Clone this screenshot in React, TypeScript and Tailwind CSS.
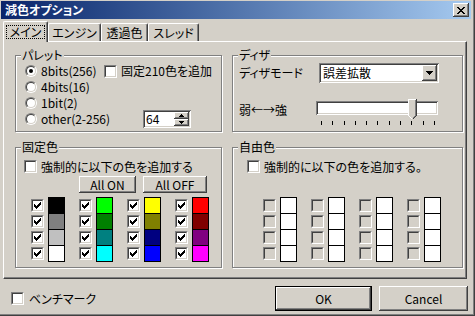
import React from "react";

const RAISED = "shadow-[inset_-1px_-1px_#404040,inset_1px_1px_#ffffff,inset_-2px_-2px_#808080]";
const SUNKEN = "shadow-[inset_1px_1px_#808080,inset_-1px_-1px_#ffffff,inset_2px_2px_#404040,inset_-2px_-2px_#d4d0c8]";

function CheckMark() {
  const rows: [number, number, number][] = [
    [6, 0, 1], [5, 1, 2], [0, 2, 1], [4, 2, 3], [0, 3, 2], [3, 3, 3], [0, 4, 5], [1, 5, 3], [2, 6, 1],
  ];
  return (
    <svg width="7" height="7" viewBox="0 0 7 7" shapeRendering="crispEdges">
      {rows.map(([x, y, w], i) => (
        <rect key={i} x={x} y={y} width={w} height={1} fill="#000" />
      ))}
    </svg>
  );
}

function Check({ checked = false, disabled = false }: { checked?: boolean; disabled?: boolean }) {
  return (
    <div className="w-[13px] h-[13px] shrink-0 border border-t-[#808080] border-l-[#808080] border-r-white border-b-white">
      <div
        className={
          disabled
            ? "w-full h-full border border-t-[#404040] border-l-[#404040] border-r-[#d4d0c8] border-b-[#d4d0c8] bg-[#d4d0c8] flex items-center justify-center"
            : "w-full h-full border border-t-[#404040] border-l-[#404040] border-r-[#d4d0c8] border-b-[#d4d0c8] bg-white flex items-center justify-center"
        }
      >
        {checked && <CheckMark />}
      </div>
    </div>
  );
}

function Radio({ checked = false }: { checked?: boolean }) {
  return (
    <div className="w-[12px] h-[12px] shrink-0 rounded-full border border-t-[#808080] border-l-[#808080] border-r-white border-b-white">
      <div className="w-full h-full rounded-full border border-t-[#404040] border-l-[#404040] border-r-[#d4d0c8] border-b-[#d4d0c8] bg-white flex items-center justify-center">
        {checked && <div className="w-[4px] h-[4px] rounded-full bg-black" />}
      </div>
    </div>
  );
}

function Group({ label, children }: { label: string; children: React.ReactNode }) {
  return (
    <div className="relative border border-[#808080] shadow-[inset_1px_1px_#ffffff,1px_1px_#ffffff]">
      <span className="absolute left-[5px] -top-[8px] px-[1px] bg-[#d4d0c8] leading-[14px] whitespace-nowrap">
        {label}
      </span>
      {children}
    </div>
  );
}

function Arrow({ up }: { up: boolean }) {
  return (
    <svg width="5" height="3" viewBox="0 0 5 3" shapeRendering="crispEdges">
      {up ? (
        <>
          <rect x="2" y="0" width="1" height="1" fill="#000" />
          <rect x="1" y="1" width="3" height="1" fill="#000" />
          <rect x="0" y="2" width="5" height="1" fill="#000" />
        </>
      ) : (
        <>
          <rect x="0" y="0" width="5" height="1" fill="#000" />
          <rect x="1" y="1" width="3" height="1" fill="#000" />
          <rect x="2" y="2" width="1" height="1" fill="#000" />
        </>
      )}
    </svg>
  );
}

function Spinner() {
  return (
    <div className={`w-[48px] h-[18px] bg-white p-[2px] flex ${SUNKEN}`}>
      <span className="flex-1 pl-[1px] leading-[14px]">64</span>
      <div className="w-[15px] flex flex-col">
        <div className={`h-[7px] bg-[#d4d0c8] flex items-center justify-center ${RAISED}`}>
          <Arrow up />
        </div>
        <div className={`h-[7px] bg-[#d4d0c8] flex items-center justify-center ${RAISED}`}>
          <Arrow up={false} />
        </div>
      </div>
    </div>
  );
}

function Combo() {
  return (
    <div className={`w-[120px] h-[20px] bg-white p-[2px] flex items-center ${SUNKEN}`}>
      <span className="flex-1 pl-[2px]">誤差拡散</span>
      <div className={`w-[15px] h-[16px] bg-[#d4d0c8] flex items-center justify-center ${RAISED}`}>
        <svg width="7" height="4" viewBox="0 0 7 4" shapeRendering="crispEdges">
          <rect x="0" y="0" width="7" height="1" fill="#000" />
          <rect x="1" y="1" width="5" height="1" fill="#000" />
          <rect x="2" y="2" width="3" height="1" fill="#000" />
          <rect x="3" y="3" width="1" height="1" fill="#000" />
        </svg>
      </div>
    </div>
  );
}

function Slider() {
  const ticks = Array.from({ length: 11 });
  return (
    <div className="relative w-[122px] h-[26px]">
      <div className={`mt-[2px] h-[14px] bg-white ${SUNKEN}`} />
      <div className="flex justify-between pl-[5px] pr-[3px] mt-[6px]">
        {ticks.map((_, i) => (
          <div key={i} className="w-[1px] h-[4px] bg-black" />
        ))}
      </div>
      <svg className="absolute left-[92px] top-0" width="9" height="21" viewBox="0 0 9 21" shapeRendering="crispEdges">
        <polygon points="0,0 9,0 9,16 4.5,20.5 0,16" fill="#d4d0c8" />
        <path d="M0.5 16 V0.5 H8" stroke="#ffffff" fill="none" />
        <path d="M0.5 16.5 L4 20" stroke="#ffffff" fill="none" />
        <path d="M7.5 1 V16.3 L4.5 19.3" stroke="#808080" fill="none" />
        <path d="M8.5 0 V16.5 L4.5 20.5" stroke="#404040" fill="none" />
      </svg>
    </div>
  );
}

function Swatches({ cells }: { cells: string[] }) {
  return (
    <div className="w-[17px] flex flex-col border border-black">
      {cells.map((c, i) => (
        <div key={i} className={i === 0 ? `h-[15px] ${c}` : `h-[16px] border-t border-black ${c}`} />
      ))}
    </div>
  );
}

function ColorColumn({ cells, checked, disabled }: { cells: string[]; checked: boolean; disabled: boolean }) {
  return (
    <div className="flex gap-[4px]">
      <div className="flex flex-col gap-[3px] pt-[2px]">
        {cells.map((_, i) => (
          <Check key={i} checked={checked} disabled={disabled} />
        ))}
      </div>
      <Swatches cells={cells} />
    </div>
  );
}

const FIXED = [
  ["bg-[#000000]", "bg-[#808080]", "bg-[#c0c0c0]", "bg-[#ffffff]"],
  ["bg-[#00ff00]", "bg-[#008000]", "bg-[#008080]", "bg-[#00ffff]"],
  ["bg-[#ffff00]", "bg-[#808000]", "bg-[#000080]", "bg-[#0000ff]"],
  ["bg-[#ff0000]", "bg-[#800000]", "bg-[#800080]", "bg-[#ff00ff]"],
];
const FREE = ["bg-white", "bg-white", "bg-white", "bg-white"];

function Button({ children, className }: { children: React.ReactNode; className: string }) {
  return (
    <div className={`bg-[#d4d0c8] flex items-center justify-center ${RAISED} ${className}`}>{children}</div>
  );
}

export default function App() {
  return (
    <div className="w-[475px] h-[316px] overflow-hidden bg-[#d4d0c8] text-black text-[12px] leading-[14px] font-['Noto_Sans_CJK_JP',sans-serif] [font-feature-settings:'palt'] shadow-[inset_-1px_-1px_#404040,inset_-2px_-2px_#808080]">
      <div className="flex flex-col pl-[1px] pt-[1px] pr-[4px]">
        {/* Title bar */}
        <div className="h-[18px] flex items-center bg-linear-to-r from-[#0a246a] to-[#a6caf0] pl-[4px] pr-[2px]">
          <span className="text-white font-bold text-[12px]">減色オプション</span>
          <div className={`ml-auto w-[16px] h-[14px] bg-[#d4d0c8] flex items-center justify-center ${RAISED}`}>
            <svg width="8" height="7" viewBox="0 0 8 7" shapeRendering="crispEdges">
              <rect x="0" y="0" width="2" height="1" fill="#000" />
              <rect x="6" y="0" width="2" height="1" fill="#000" />
              <rect x="1" y="1" width="2" height="1" fill="#000" />
              <rect x="5" y="1" width="2" height="1" fill="#000" />
              <rect x="2" y="2" width="4" height="1" fill="#000" />
              <rect x="3" y="3" width="2" height="1" fill="#000" />
              <rect x="2" y="4" width="4" height="1" fill="#000" />
              <rect x="1" y="5" width="2" height="1" fill="#000" />
              <rect x="5" y="5" width="2" height="1" fill="#000" />
              <rect x="0" y="6" width="2" height="1" fill="#000" />
              <rect x="6" y="6" width="2" height="1" fill="#000" />
            </svg>
          </div>
        </div>

        {/* Tabs */}
        <div className="relative z-10 flex items-end h-[20px] mt-[2px] ml-[2px]">
          <div className="w-[45px] h-[21px] -mb-[1px] bg-[#d4d0c8] border-t border-l border-white border-r border-r-[#404040] rounded-tl-[2px] rounded-tr-[2px] shadow-[inset_-1px_0_#808080] flex items-start justify-center pt-[3px]">
            <span className="border border-dotted border-black px-[3px] leading-[12px] h-[14px]">メイン</span>
          </div>
          <div className="w-[53px] h-[18px] border-t border-l border-white border-r border-r-[#404040] rounded-tl-[2px] rounded-tr-[2px] shadow-[inset_-1px_0_#808080] flex items-center justify-center">
            エンジン
          </div>
          <div className="w-[47px] h-[18px] border-t border-l border-white border-r border-r-[#404040] rounded-tl-[2px] rounded-tr-[2px] shadow-[inset_-1px_0_#808080] flex items-center justify-center">
            透過色
          </div>
          <div className="w-[51px] h-[18px] border-t border-l border-white border-r border-r-[#404040] rounded-tl-[2px] rounded-tr-[2px] shadow-[inset_-1px_0_#808080] flex items-center justify-center">
            スレッド
          </div>
        </div>

        {/* Panel */}
        <div className="w-[464px] h-[238px] ml-[2px] border-t border-l border-white border-r border-b border-r-[#404040] border-b-[#404040] shadow-[inset_-1px_-1px_#808080]">
          <div className="grid grid-cols-[207px_231px] grid-rows-[77px_121px] gap-x-[10px] gap-y-[15px] pl-[11px] pt-[13px]">
            <Group label="パレット">
              <div className="flex flex-col pl-[9px] pt-[7px]">
                <div className="flex items-center h-[16px]">
                  <div className="flex items-center gap-[4px] w-[79px]">
                    <Radio checked />
                    <span>8bits(256)</span>
                  </div>
                  <Check />
                  <span className="ml-[4px]">固定210色を追加</span>
                </div>
                <div className="flex items-center gap-[4px] h-[16px]">
                  <Radio />
                  <span>4bits(16)</span>
                </div>
                <div className="flex items-center gap-[4px] h-[16px]">
                  <Radio />
                  <span>1bit(2)</span>
                </div>
                <div className="flex items-center h-[16px]">
                  <div className="flex items-center gap-[4px] w-[118px]">
                    <Radio />
                    <span>other(2-256)</span>
                  </div>
                  <Spinner />
                </div>
              </div>
            </Group>

            <Group label="ディザ">
              <div className="flex flex-col pl-[6px] pt-[7px]">
                <div className="flex items-center h-[20px]">
                  <span className="w-[80px]">ディザモード</span>
                  <Combo />
                </div>
                <div className="flex items-start mt-[16px]">
                  <span className="w-[77px] mt-[4px]">弱←→強</span>
                  <Slider />
                </div>
              </div>
            </Group>

            <Group label="固定色">
              <div className="flex flex-col pl-[8px] pt-[12px]">
                <div className="flex items-center h-[13px] gap-[4px]">
                  <Check />
                  <span>強制的に以下の色を追加する</span>
                </div>
                <div className="flex gap-[7px] ml-[55px] mt-[3px]">
                  <Button className="w-[57px] h-[17px]">All ON</Button>
                  <Button className="w-[64px] h-[17px]">All OFF</Button>
                </div>
                <div className="flex gap-[14px] ml-[7px] mt-[4px]">
                  {FIXED.map((cells, i) => (
                    <ColorColumn key={i} cells={cells} checked disabled={false} />
                  ))}
                </div>
              </div>
            </Group>

            <Group label="自由色">
              <div className="flex flex-col pl-[14px] pt-[12px]">
                <div className="flex items-center h-[13px] gap-[4px]">
                  <Check />
                  <span>強制的に以下の色を追加する。</span>
                </div>
                <div className="flex gap-[14px] ml-[16px] mt-[24px]">
                  {[0, 1, 2, 3].map((i) => (
                    <ColorColumn key={i} cells={FREE} checked={false} disabled />
                  ))}
                </div>
              </div>
            </Group>
          </div>
        </div>

        {/* Bottom row */}
        <div className="flex items-center h-[25px] mt-[7px] ml-[2px] w-[465px]">
          <div className="flex items-center gap-[5px] pl-[8px]">
            <Check />
            <span>ベンチマーク</span>
          </div>
          <div className="ml-auto w-[97px] h-[25px] border border-black">
            <Button className="w-full h-full">OK</Button>
          </div>
          <Button className="ml-[7px] w-[89px] h-[25px]">Cancel</Button>
        </div>
      </div>
    </div>
  );
}
